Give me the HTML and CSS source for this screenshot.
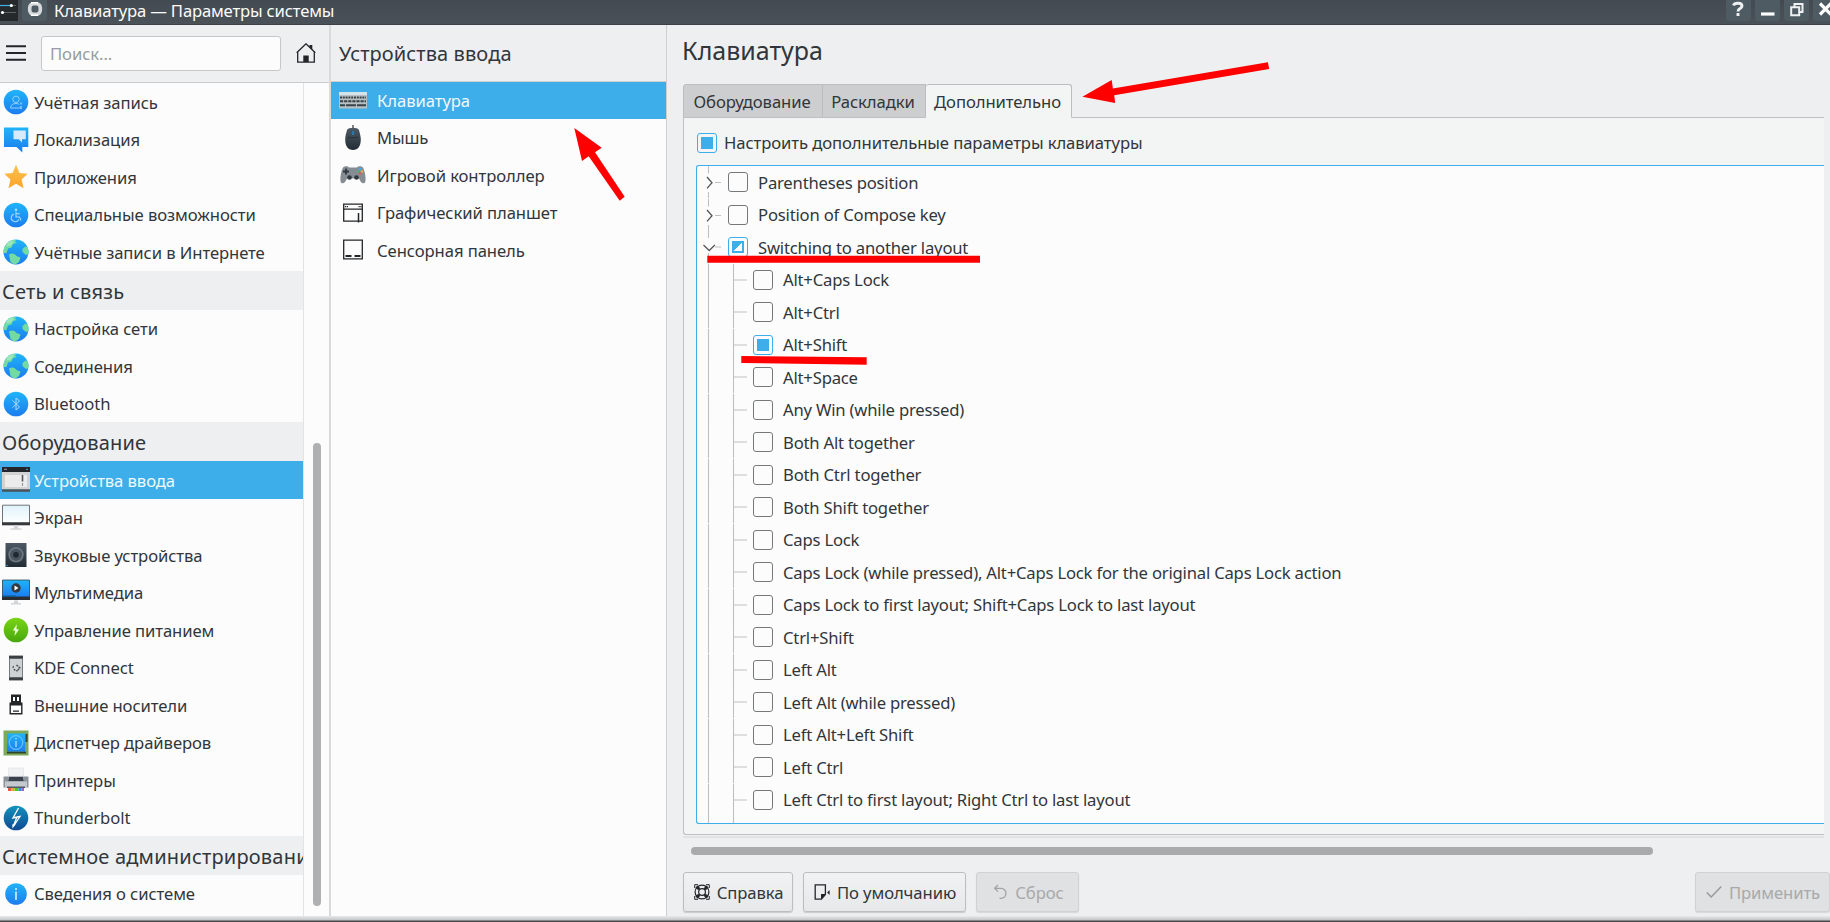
FILE: index.html
```html
<!DOCTYPE html>
<html lang="ru">
<head>
<meta charset="utf-8">
<title>Клавиатура — Параметры системы</title>
<link rel="stylesheet" href="styles.css">
</head>
<body>
<svg class="defs" width="0" height="0">
  <defs>
    <linearGradient id="blue" x1="0" y1="0" x2="0" y2="1"><stop offset="0" stop-color="#1fb4f8"/><stop offset="1" stop-color="#1c7cf0"/></linearGradient>
    <linearGradient id="green" x1="0" y1="0" x2="0" y2="1"><stop offset="0" stop-color="#79d515"/><stop offset="1" stop-color="#47a70c"/></linearGradient>
    <linearGradient id="deep" x1="0" y1="0" x2="0" y2="1"><stop offset="0" stop-color="#1392bd"/><stop offset="1" stop-color="#0e4a93"/></linearGradient>
    <linearGradient id="gold" x1="0" y1="0" x2="0" y2="1"><stop offset="0" stop-color="#fcc24c"/><stop offset="1" stop-color="#fca42c"/></linearGradient>
    <linearGradient id="glass" x1="0" y1="0" x2="0" y2="1"><stop offset="0" stop-color="#dff3fb"/><stop offset="1" stop-color="#ffffff"/></linearGradient>
    <linearGradient id="slate" x1="0" y1="0" x2="0" y2="1"><stop offset="0" stop-color="#4d5a66"/><stop offset="1" stop-color="#232c34"/></linearGradient>
    <clipPath id="disc"><circle cx="14" cy="14" r="12.5"/></clipPath>
    <symbol id="i-user" viewBox="0 0 28 28"><circle cx="14" cy="14" r="12.3" fill="url(#blue)"/><g fill="none" stroke="#8fd0fa" stroke-width="1"><circle cx="14" cy="11.3" r="3.2"/><path d="M8.5 20.2c.2-3.4 2.4-4.7 5.5-4.7 1.2 0 2.4.3 3.2.8M8.500 20h8.500"/></g><path d="M19 14.500v2M19 18v3M17.500 20h1" stroke="#8fd0fa" stroke-width="1.500"/></symbol>
    <symbol id="i-locale" viewBox="0 0 28 28"><path d="M2 1.500h24.300v19.500h-6v5.500L14.500 21H2z" fill="url(#blue)"/><path d="M11.500 4.500h12.300v8.700H20v3.300l-3.200-3.300h-5.300z" fill="#d5eafb"/></symbol>
    <symbol id="i-star" viewBox="0 0 28 28"><path d="M14 1.800l3.500 8.100 8.200.8-6.100 5.800 1.900 8.800-7.500-4.500-7.500 4.500 1.900-8.800-6.100-5.800 8.200-.8z" fill="url(#gold)"/></symbol>
    <symbol id="i-access" viewBox="0 0 28 28"><circle cx="14" cy="14" r="12.3" fill="url(#blue)"/><circle cx="14" cy="8.700" r="1.300" fill="#a8dcfb"/><path d="M14 10.500v5.500h3.500l1.500 3.500M14 12.800h3.800M11.800 13a4 4 0 1 0 5 5.500" fill="none" stroke="#a8dcfb" stroke-width="1.100"/></symbol>
    <symbol id="i-globe" viewBox="0 0 28 28"><circle cx="14" cy="14" r="12.500" fill="url(#blue)"/><g clip-path="url(#disc)" fill="#74dba0"><path d="M14 2c-1.500 1.500-.5 2.500 1 3l-4 1-1.500 3.500-3.500 1-1.500 4.500L1 15V2z"/><path d="M20.500 11l3-2.500 3.500 1v6.500l-3 1-3.500-3z"/><path d="M7 16.500c3-2 6-1 7.500 1.500l4 1.500-1.500 4.500-4.500 3-4-3z"/><path d="M18 1.500l4 2-2 .5z"/></g><path d="M6 4.500l4-2 2 1-3 4-5 1z" fill="#9de8bb"/></symbol>
    <symbol id="i-bt" viewBox="0 0 28 28"><circle cx="14" cy="14" r="12.300" fill="url(#blue)"/><path d="M10.500 10.500l7 6.500-3.500 3V8l3.500 3-7 6.500" fill="none" stroke="#a8dcfb" stroke-width="1"/></symbol>
    <symbol id="i-input" viewBox="0 0 28 28"><path d="M0 1h28v5H0z" fill="#232629"/><path d="M2 3.300h3" stroke="#888" stroke-width="1.200"/><path d="M24 3.300h2" stroke="#3daee9"/><path d="M0 6h28v17.500H0z" fill="#d2d2d2"/><path d="M3 9h22v12H3z" fill="#ececec"/><path d="M20.500 9v6.500" stroke="#555" stroke-width="1.600"/><path d="M20.500 17v3" stroke="#999" stroke-width="1.200"/><path d="M0 23.300h28v2.500H0z" fill="#4d5358"/></symbol>
    <symbol id="i-screen" viewBox="0 0 28 28"><path d="M.5 1.200h27v18H.5z" fill="url(#glass)" stroke="#6f7478"/><path d="M0 18.300h28v3H0z" fill="#34383b"/><path d="M12 21.300h4v3h3.500v1.500h-11v-1.500H12z" fill="#d3d6d9"/></symbol>
    <symbol id="i-sound" viewBox="0 0 28 28"><path d="M3.500 2h21v24h-21z" fill="url(#slate)"/><circle cx="14" cy="13.800" r="7.700" fill="#6c7680"/><circle cx="14" cy="13.800" r="6" fill="#48535d"/><circle cx="14" cy="13.800" r="2.800" fill="#1f272e"/><circle cx="5" cy="24.500" r=".7" fill="#3daee9"/></symbol>
    <symbol id="i-media" viewBox="0 0 28 28"><path d="M.3 1h27.400v17H.3z" fill="url(#blue)"/><path d="M.5 1v19h27V1z" fill="none" stroke="#34474f" stroke-width=".8"/><path d="M0 17.500h28v3.500H0z" fill="#2a2e32"/><path d="M0 16.500h14v1.500H0z" fill="#0e5a8c"/><circle cx="14" cy="9" r="4.700" fill="#343a40"/><path d="M12.500 6.500l4 2.500-4 2.500z" fill="#fff"/><path d="M12 21.500h4v2.500h3v1.500H9V24h3z" fill="#d3d6d9"/></symbol>
    <symbol id="i-power" viewBox="0 0 28 28"><circle cx="14" cy="14" r="12.300" fill="url(#green)"/><path d="M14.800 8.300l-4 6.300h2.400L12.500 20l4.500-6.700h-2.500z" fill="#eafbd8"/></symbol>
    <symbol id="i-phone" viewBox="0 0 28 28"><path d="M7 1.500h14v25H7z" fill="#5e6468"/><path d="M7.800 5h12.400v18H7.800z" fill="#cdd1d4"/><path d="M7 2h14v2H7zM7 24h14v2H7z" fill="#3b4045"/><path d="M12 15a3 3 0 0 0 4 1.500M14.500 11l3.500 3-3 2.500M10.500 13h1.500" fill="none" stroke="#44494d" stroke-width="1.300" stroke-dasharray="2 .8"/></symbol>
    <symbol id="i-usb" viewBox="0 0 28 28"><path d="M9 3.500h10v9H9z" fill="#232629"/><path d="M11 6h2v4h-2zM15 6h2v4h-2z" fill="#fff"/><path d="M8.200 12.300h11.600v10.500H8.200z" fill="#fff" stroke="#232629" stroke-width="1.400"/><path d="M8 12h12v2.500H8zM11 19.500h6v1.300h-6z" fill="#232629"/></symbol>
    <symbol id="i-driver" viewBox="0 0 28 28"><path d="M1.500 1.500h25v25h-25z" fill="#7da95d"/><path d="M5 22.500h19v2H5zM23.500 5h2v8h-2z" fill="#2f4526"/><path d="M5 4.500h18v18H5z" fill="url(#blue)"/><circle cx="14" cy="13.500" r="6.800" fill="none" stroke="#63c2f8" stroke-width="1.200"/><path d="M14 9v1.500M14 12v6" stroke="#9bdafb" stroke-width="1.500"/></symbol>
    <symbol id="i-printer" viewBox="0 0 28 28"><path d="M1.500 10.500h4.500v3h16v-3h4.500v11h-25z" fill="#8b9399"/><path d="M6.500 9.500h15v5.500h-15z" fill="#38414c"/><path d="M6.500 2h15v8.500h-15z" fill="#f0f1f2" stroke="#dcdee0" stroke-width=".5"/><path d="M3 15.500h22v6H3z" fill="#c4c9cd"/><path d="M5 20.500h18v1.500H5z" fill="#545b61"/><path d="M6 22h3.500v3H6z" fill="#e8544a"/><path d="M9.500 22h3v3h-3z" fill="#e8a425"/><path d="M12.500 22h4v3h-4z" fill="#4fc42b"/><path d="M16.500 22h3v3h-3z" fill="#2e8de0"/><path d="M19.500 22h2.500v3h-2.500z" fill="#9a62d1"/></symbol>
    <symbol id="i-bolt" viewBox="0 0 28 28"><circle cx="14" cy="14" r="12.300" fill="url(#deep)"/><path d="M16.500 4l-5.500 10 4-1-3.500 8.500M15 13l3-.5-6 9" fill="none" stroke="#fff" stroke-width="1.300"/><path d="M10.200 20.500l3.500-.5-3.200 4.500z" fill="#fff"/></symbol>
    <symbol id="i-info" viewBox="0 0 28 28"><circle cx="14" cy="14" r="10.800" fill="url(#blue)"/><path d="M14 8v2M14 11.500v8.500" stroke="#c8ebfd" stroke-width="1.700"/></symbol>
    <symbol id="i-kbd" viewBox="0 0 28 28"><path d="M0 6h28v16.500H0z" fill="#b9c0c3"/><path d="M0 6h28v3H0z" fill="#d3e3e8"/><g stroke="#3a4248" stroke-width="2"><path d="M1 11.500h26" stroke-dasharray="2 .8"/><path d="M1 15.200h26" stroke-dasharray="3.200 .9"/><path d="M1 19.200h5M7 19.200h10M18 19.200h9" /></g></symbol>
    <symbol id="i-mouse" viewBox="0 0 28 28"><path d="M14 1v4" stroke="#333" stroke-width="1.200"/><path d="M8 6c1.500-3 10.500-3 12 0 .7 3 1.800 6 1.800 9.500 0 6.500-2.800 10.500-7.800 10.500s-7.800-4-7.800-10.500C6.200 12 7.300 9 8 6z" fill="url(#slate)"/><path d="M14 7v4" stroke="#2980b9" stroke-width="1.600"/><path d="M9 13c3 1 7 1 10 0" stroke="#2a333b" fill="none"/></symbol>
    <symbol id="i-pad" viewBox="0 0 28 28"><path d="M4 6.500C6 4.500 9 5 10 6.500h8c1-1.500 4-2 6 0 2 4 3.500 12 2 15-2 2-4 .5-6-4H8c-2 4.500-4 6-6 4-1.500-3 0-11 2-15z" fill="#858d93"/><path d="M7 7.500v6M4 10.500h6" stroke="#30383f" stroke-width="1.800"/><circle cx="21" cy="8" r="1.300" fill="#3daee9"/><circle cx="19.500" cy="10.500" r="1.300" fill="#4caf75"/><circle cx="23" cy="10.500" r="1.300" fill="#e8a848"/><circle cx="21" cy="12.500" r="1.300" fill="#da5a55"/><circle cx="10.500" cy="16.500" r="2.300" fill="#30383f"/><circle cx="17.500" cy="16.500" r="2.300" fill="#30383f"/></symbol>
    <symbol id="i-tablet" viewBox="0 0 28 28"><path d="M4.700 5.200h18.600v17H4.700zM4 10.200h20" fill="none" stroke="#232629" stroke-width="1.300"/><path d="M6 7.700h3M19.500 7.700h3" stroke="#232629" stroke-width="1.200" stroke-dasharray="1.200 .6"/><path d="M19.500 14v9.500" stroke="#232629" stroke-width="1.500"/></symbol>
    <symbol id="i-touch" viewBox="0 0 28 28"><path d="M4.700 4.200h18.600v18.600H4.700z" fill="none" stroke="#232629" stroke-width="1.300"/><path d="M6.500 20h6M15.500 20h6" stroke="#232629" stroke-width="2"/></symbol>
    <symbol id="t-top" viewBox="0 0 31 32.500"><path d="M11.500 0v7.500M11.500 26v6.500M18 16.500h6" stroke="#bfc0c0" stroke-width="1.100"/><path d="M10 11l5 5.700-5 5.700" fill="none" stroke="#55585a" stroke-width="1.300"/></symbol>
    <symbol id="t-open" viewBox="0 0 31 32.500"><path d="M11.500 0v7M11.500 22v10.500M18 16h6" stroke="#bfc0c0" stroke-width="1.100"/><path d="M6.500 14l5.700 5.500 5.700-5.500" fill="none" stroke="#55585a" stroke-width="1.300"/></symbol>
    <symbol id="t-kid" viewBox="0 0 56 32.500"><path d="M11.500 0v32.500M36.500 0v32.500M36.500 16h13.500" fill="none" stroke="#bfc0c0" stroke-width="1.100"/></symbol>
  </defs>
</svg>

<div class="window">
  <header class="titlebar">
    <svg class="app-icon" viewBox="0 0 18 21"><path d="M0 0h18v21H0z" fill="#26292c"/><path d="M0 5.500h10" stroke="#3daee9" stroke-width="1.200"/><path d="M10 5.500h6M4 12.500h12" stroke="#5d6265" stroke-width="1.200"/><circle cx="11.300" cy="5.500" r="1.600" fill="#fff"/><circle cx="2.500" cy="12.500" r="1.600" fill="#fff"/></svg>
    <span class="tbtn pin"><svg viewBox="0 0 25 21"><rect x="7.700" y="3.700" width="10.600" height="10.600" rx="4" fill="none" stroke="#d5d9dc" stroke-width="3.600"/><path d="M9 2.700h7M9 15.300h7" stroke="#fff" stroke-width="1.500"/></svg></span>
    <h1 class="caption">Клавиатура — Параметры системы</h1>
    <div class="controls">
      <span class="tbtn"><svg viewBox="0 0 25 21"><path d="M7.500 5.500c1-3 8.500-3 8.500.5 0 3-4 2-4 5.500M12 13v3" fill="none" stroke="#eef0f1" stroke-width="2.900"/></svg></span>
      <span class="tbtn"><svg viewBox="0 0 25 21"><path d="M6 14h13.500" stroke="#fcfcfc" stroke-width="3.200"/></svg></span>
      <span class="tbtn"><svg viewBox="0 0 25 21"><path d="M7.200 7.200h8v8h-8zM10.500 6.500V4h8v8h-2.500" fill="none" stroke="#eef0f1" stroke-width="2"/></svg></span>
      <span class="tbtn"><svg viewBox="0 0 25 21"><path d="M7 3.500l11 11M18 3.500l-11 11" fill="none" stroke="#fcfcfc" stroke-width="3.200"/></svg></span>
    </div>
  </header>

  <main class="columns">
    <aside class="sidebar">
      <div class="toolbar">
        <svg class="burger" viewBox="0 0 20 16"><path d="M0 1.200h20M0 8h20M0 14.800h20" stroke="#232629" stroke-width="2"/></svg>
        <div class="search">Поиск...</div>
        <svg class="home" viewBox="0 0 20 20"><path d="M.7 9.800L10 .8l9.300 9M1.700 9v10.200h16.600V9" fill="none" stroke="#232629" stroke-width="1.300"/><path d="M13.500 2h2.800v5L13.500 4.300zM7.300 12.500h5.400V19H7.300z" fill="#232629"/></svg>
      </div>
      <div class="side-body">
        <nav class="categories">
          <a class="item"><svg><use href="#i-user"/></svg>Учётная запись</a>
          <a class="item"><svg><use href="#i-locale"/></svg>Локализация</a>
          <a class="item"><svg><use href="#i-star"/></svg>Приложения</a>
          <a class="item"><svg><use href="#i-access"/></svg>Специальные возможности</a>
          <a class="item"><svg><use href="#i-globe"/></svg>Учётные записи в Интернете</a>
          <h2 class="group">Сеть и связь</h2>
          <a class="item"><svg><use href="#i-globe"/></svg>Настройка сети</a>
          <a class="item"><svg><use href="#i-globe"/></svg>Соединения</a>
          <a class="item"><svg><use href="#i-bt"/></svg>Bluetooth</a>
          <h2 class="group">Оборудование</h2>
          <a class="item selected"><svg><use href="#i-input"/></svg>Устройства ввода</a>
          <a class="item"><svg><use href="#i-screen"/></svg>Экран</a>
          <a class="item"><svg><use href="#i-sound"/></svg>Звуковые устройства</a>
          <a class="item"><svg><use href="#i-media"/></svg>Мультимедиа</a>
          <a class="item"><svg><use href="#i-power"/></svg>Управление питанием</a>
          <a class="item"><svg><use href="#i-phone"/></svg>KDE Connect</a>
          <a class="item"><svg><use href="#i-usb"/></svg>Внешние носители</a>
          <a class="item"><svg><use href="#i-driver"/></svg>Диспетчер драйверов</a>
          <a class="item"><svg><use href="#i-printer"/></svg>Принтеры</a>
          <a class="item"><svg><use href="#i-bolt"/></svg>Thunderbolt</a>
          <h2 class="group">Системное администрировани</h2>
          <a class="item"><svg><use href="#i-info"/></svg>Сведения о системе</a>
        </nav>
        <div class="scroll"><div class="thumb"></div></div>
      </div>
    </aside>

    <section class="modules">
      <h2 class="modules-title">Устройства ввода</h2>
      <nav>
        <a class="item selected"><svg><use href="#i-kbd"/></svg>Клавиатура</a>
        <a class="item"><svg><use href="#i-mouse"/></svg>Мышь</a>
        <a class="item"><svg><use href="#i-pad"/></svg>Игровой контроллер</a>
        <a class="item"><svg><use href="#i-tablet"/></svg>Графический планшет</a>
        <a class="item"><svg><use href="#i-touch"/></svg>Сенсорная панель</a>
      </nav>
    </section>

    <section class="content">
      <h2 class="page-title">Клавиатура</h2>
      <div class="tabs">
        <span class="tab t1">Оборудование</span><span class="tab t2">Раскладки</span><span class="tab active">Дополнительно</span>
      </div>
      <div class="panel">
        <label class="enable"><i class="box on"></i>Настроить дополнительные параметры клавиатуры</label>
        <div class="tree">
          <div class="row top"><svg><use href="#t-top"/></svg><i class="box"></i>Parentheses position</div>
          <div class="row top"><svg><use href="#t-top"/></svg><i class="box"></i>Position of Compose key</div>
          <div class="row top"><svg><use href="#t-open"/></svg><i class="box partial"></i>Switching to another layout</div>
          <div class="row"><svg><use href="#t-kid"/></svg><i class="box"></i>Alt+Caps Lock</div>
          <div class="row"><svg><use href="#t-kid"/></svg><i class="box"></i>Alt+Ctrl</div>
          <div class="row"><svg><use href="#t-kid"/></svg><i class="box on"></i>Alt+Shift</div>
          <div class="row"><svg><use href="#t-kid"/></svg><i class="box"></i>Alt+Space</div>
          <div class="row"><svg><use href="#t-kid"/></svg><i class="box"></i>Any Win (while pressed)</div>
          <div class="row"><svg><use href="#t-kid"/></svg><i class="box"></i>Both Alt together</div>
          <div class="row"><svg><use href="#t-kid"/></svg><i class="box"></i>Both Ctrl together</div>
          <div class="row"><svg><use href="#t-kid"/></svg><i class="box"></i>Both Shift together</div>
          <div class="row"><svg><use href="#t-kid"/></svg><i class="box"></i>Caps Lock</div>
          <div class="row"><svg><use href="#t-kid"/></svg><i class="box"></i>Caps Lock (while pressed), Alt+Caps Lock for the original Caps Lock action</div>
          <div class="row"><svg><use href="#t-kid"/></svg><i class="box"></i>Caps Lock to first layout; Shift+Caps Lock to last layout</div>
          <div class="row"><svg><use href="#t-kid"/></svg><i class="box"></i>Ctrl+Shift</div>
          <div class="row"><svg><use href="#t-kid"/></svg><i class="box"></i>Left Alt</div>
          <div class="row"><svg><use href="#t-kid"/></svg><i class="box"></i>Left Alt (while pressed)</div>
          <div class="row"><svg><use href="#t-kid"/></svg><i class="box"></i>Left Alt+Left Shift</div>
          <div class="row"><svg><use href="#t-kid"/></svg><i class="box"></i>Left Ctrl</div>
          <div class="row"><svg><use href="#t-kid"/></svg><i class="box"></i>Left Ctrl to first layout; Right Ctrl to last layout</div>
          <div class="row"><svg><use href="#t-kid"/></svg></div>
        </div>
      </div>
      <div class="panel-edge"></div>
      <div class="hscroll"></div>
      <footer class="buttons">
        <button class="btn help"><svg viewBox="0 0 16 16"><g fill="none" stroke="#232629"><circle cx="8" cy="8" r="6.900" stroke-width="1.200"/><circle cx="8" cy="8" r="3.400" stroke-width="1.200"/><path d="M.7 4V.7H4M12 .7h3.300V4M15.300 12v3.300H12M4 15.300H.7V12" stroke-width="1"/><path d="M2.500 2.500l2.800 2.800M13.500 2.500l-2.800 2.800M2.500 13.500l2.800-2.800M13.500 13.500l-2.800-2.800" stroke-width="3"/></g></svg>Справка</button>
        <button class="btn defaults"><svg viewBox="0 0 16 16"><path d="M1.200.800h10.200v9.700l-4 4.700H1.200z" fill="none" stroke="#232629" stroke-width="1.300"/><path d="M7 15.500V10h5zM15.600 6v5l-2.500-2.500z" fill="#232629"/></svg>По умолчанию</button>
        <button class="btn reset" disabled><svg viewBox="0 0 16 16"><path d="M6 1L2.700 4.300 6 7.600M2.700 4.300H9a5 5 0 0 1 0 10H7.500" fill="none" stroke="#a0a2a4" stroke-width="1.300"/></svg>Сброс</button>
        <button class="btn apply" disabled><svg viewBox="0 0 16 16"><path d="M.8 8.500l4.400 4.500L15.300 2.500" fill="none" stroke="#97999b" stroke-width="1.500"/></svg>Применить</button>
      </footer>
    </section>
  </main>
  <div class="window-edge"></div>

  <svg class="marks" viewBox="0 0 1830 922" fill="#fe0000">
    <path d="M574.300 128l27.400 19.700-6.700 4.500 29.700 44.500-5 4-31-44.500-6.700 4.800z"/>
    <path d="M1082.400 96.700l29.300-16.700 1.200 8.500 155-26.200 1.300 6.700-155 26.300 1 7.700z"/>
    <path d="M707.300 255.700H980v7H707.300z"/>
    <path d="M741.300 356l125.400 1.300v7.400L741.300 363z"/>
  </svg>
</div>
</body>
</html>
```
FILE: styles.css
```css
*, *::before { box-sizing: border-box; }
body {
  margin: 0;
  font-family: "Noto Sans", sans-serif;
  font-size: 16.67px;
  letter-spacing: -0.09px;
  color: #31363b;
  overflow: hidden;
}
h1, h2 { margin: 0; font-weight: 400; }
.defs { position: absolute; }
.window {
  width: 1830px;
  height: 922px;
  display: flex;
  flex-direction: column;
  background: #eeeff1;
  overflow: hidden;
}

/* title bar */
.titlebar {
  flex: none;
  height: 25px;
  display: flex;
  align-items: flex-start;
  background: linear-gradient(#434a52, #4a5158);
  border-bottom: 1px solid #3a4046;
  color: #fcfcfc;
}
.app-icon { width: 18px; height: 21px; }
.tbtn {
  width: 25px;
  height: 21px;
  background: #4f5b62;
  border-radius: 0 0 3px 3px;
}
.tbtn svg { display: block; width: 25px; height: 21px; }
.pin { margin-left: 4px; }
.caption { font-size: 16.67px; line-height: 21px; letter-spacing: -0.18px; margin-left: 7px; white-space: nowrap; }
.controls { margin-left: auto; margin-right: -8px; display: flex; gap: 4px; }

.columns {
  flex: 1;
  min-height: 0;
  display: grid;
  grid-template-columns: 331px 336px 1fr;
}
.sidebar, .modules { display: flex; flex-direction: column; min-height: 0; min-width: 0; }
.sidebar { border-right: 2px solid #d8dadb; }

.toolbar {
  flex: none;
  height: 57.500px;
  display: flex;
  align-items: center;
  padding-left: 6px;
  border-bottom: 1px solid #c9cbcc;
}
.burger { width: 20px; height: 16px; }
.search {
  width: 240px;
  height: 35px;
  margin-left: 15px;
  padding-left: 8px;
  line-height: 33px;
  border: 1px solid #c5c7c8;
  border-radius: 3px;
  background: #fcfcfc;
  color: #969c9f;
}
.home { width: 20px; height: 20px; margin-left: 15px; }

.side-body { flex: 1; min-height: 0; display: flex; background: #fcfcfc; }
.categories {
  width: 304px;
  padding-top: 1px;
  border-right: 1px solid #e2e3e4;
  overflow: hidden;
}
.item {
  height: 37.500px;
  display: flex;
  align-items: center;
  padding-left: 2px;
  gap: 4px;
  white-space: nowrap;
}
.item svg { flex: none; width: 28px; height: 28px; }
.item.selected { background: #3daee9; color: #f1f8fc; }
.group {
  height: 38.900px;
  padding-left: 2px;
  font-size: 20px;
  letter-spacing: 0.2px;
  line-height: 41px;
  white-space: nowrap;
  background: #eeeff1;
  overflow: hidden;
}
.scroll { flex: 1; padding: 360px 0 0 9px; }
.thumb { width: 8px; height: 463px; border-radius: 4px; background: #aeb0b2; }

/* module list */
.modules { background: #fcfcfc; border-right: 1px solid #cdcfd0; }
.modules-title {
  flex: none;
  height: 57px;
  padding-left: 8px;
  font-size: 20px;
  letter-spacing: 0.1px;
  line-height: 58px;
  background: #eeeff1;
  border-bottom: 1px solid #cdcfd0;
}
.modules .item { padding-left: 8px; gap: 10px; }
.modules nav { margin-top: -0.500px; }

/* page */
.content { display: flex; flex-direction: column; padding-left: 16px; min-width: 0; }
.page-title { height: 59px; margin-left: -1px; font-size: 25px; line-height: 51px; letter-spacing: 0; }
.tabs { height: 34px; display: flex; align-items: stretch; margin-bottom: -1px; }
.tab {
  width: 103px;
  height: 34px;
  padding-right: 2px;
  line-height: 33px;
  text-align: center;
  background: #cdcecf;
  border: 1px solid #bbbdbe;
  border-left-width: 0;
  white-space: nowrap;
}
.t1 { width: 140px; border-left-width: 1px; border-top-left-radius: 3px; }
.active {
  width: 146px;
  background: #f3f5f5;
  border-left-width: 0;
  border-bottom-color: #f3f5f5;
  border-radius: 3px 3px 0 0;
  z-index: 1;
}
.panel {
  width: 1141px;
  height: 718px;
  padding: 14px 0 0 12px;
  background: #f3f5f4;
  border: 1px solid #bfc1c1;
  border-right: 0;
  border-radius: 0 0 0 3px;
}
.enable { display: flex; align-items: center; gap: 7px; height: 21px; margin: 0 0 12px 1px; }
.box {
  flex: none;
  display: block;
  width: 20px;
  height: 20px;
  border: 1px solid #75787a;
  border-radius: 3px;
  background: #fcfcfc;
}
.on, .partial { border-color: #3daee9; padding: 3px; }
.on { background: #3daee9; background-clip: content-box; }
.partial::before {
  content: "";
  display: block;
  width: 12px;
  height: 12px;
  background: linear-gradient(135deg, #3daee9 50%, #fcfcfc 50%);
  border: 2px solid #3daee9;
}
.tree {
  height: 659px;
  border: 1px solid #3daee9;
  border-right: 0;
  border-radius: 3px 0 0 3px;
  background: #fcfcfc;
  letter-spacing: -0.2px;
  overflow: hidden;
}
.row { height: 32.500px; display: flex; align-items: center; white-space: nowrap; }
.row svg { flex: none; width: 56px; height: 32.500px; }
.row.top svg { width: 31px; }
.row .box { margin-right: 10px; }
.panel-edge { width: 1141px; height: 2px; margin-top: 1px; background: #e1e2e3; }
.hscroll { width: 962px; height: 8px; margin: 9px 0 17px 8px; border-radius: 4px; background: #a8aaac; flex: none; }

.buttons { display: flex; gap: 10px; }
.btn {
  flex: none;
  height: 40px;
  padding: 0 0 0 1px;
  display: flex;
  align-items: center;
  justify-content: center;
  gap: 7px;
  font: inherit;
  letter-spacing: inherit;
  color: #31363b;
  background: linear-gradient(#f1f2f3, #e7e8ea);
  border: 1px solid #bcbebf;
  border-radius: 3px;
  box-shadow: 0 1px 1px #c9cacb;
}
.btn svg { width: 16px; height: 16px; }
.help { width: 110px; }
.defaults { width: 163px; }
.reset { width: 103px; }
.apply { width: 135px; margin-left: auto; }
.btn:disabled { color: #a7a9ab; background: #dfe1e2; border-color: #cfd1d2; box-shadow: 0 1px 1px #d6d7d8; }

.window-edge { flex: none; height: 6px; background: linear-gradient(#e9eaeb, #c4c5c6 4px, #4a4a4c 5px); }
.marks { position: absolute; left: 0; top: 0; width: 1830px; height: 922px; pointer-events: none; }
```
